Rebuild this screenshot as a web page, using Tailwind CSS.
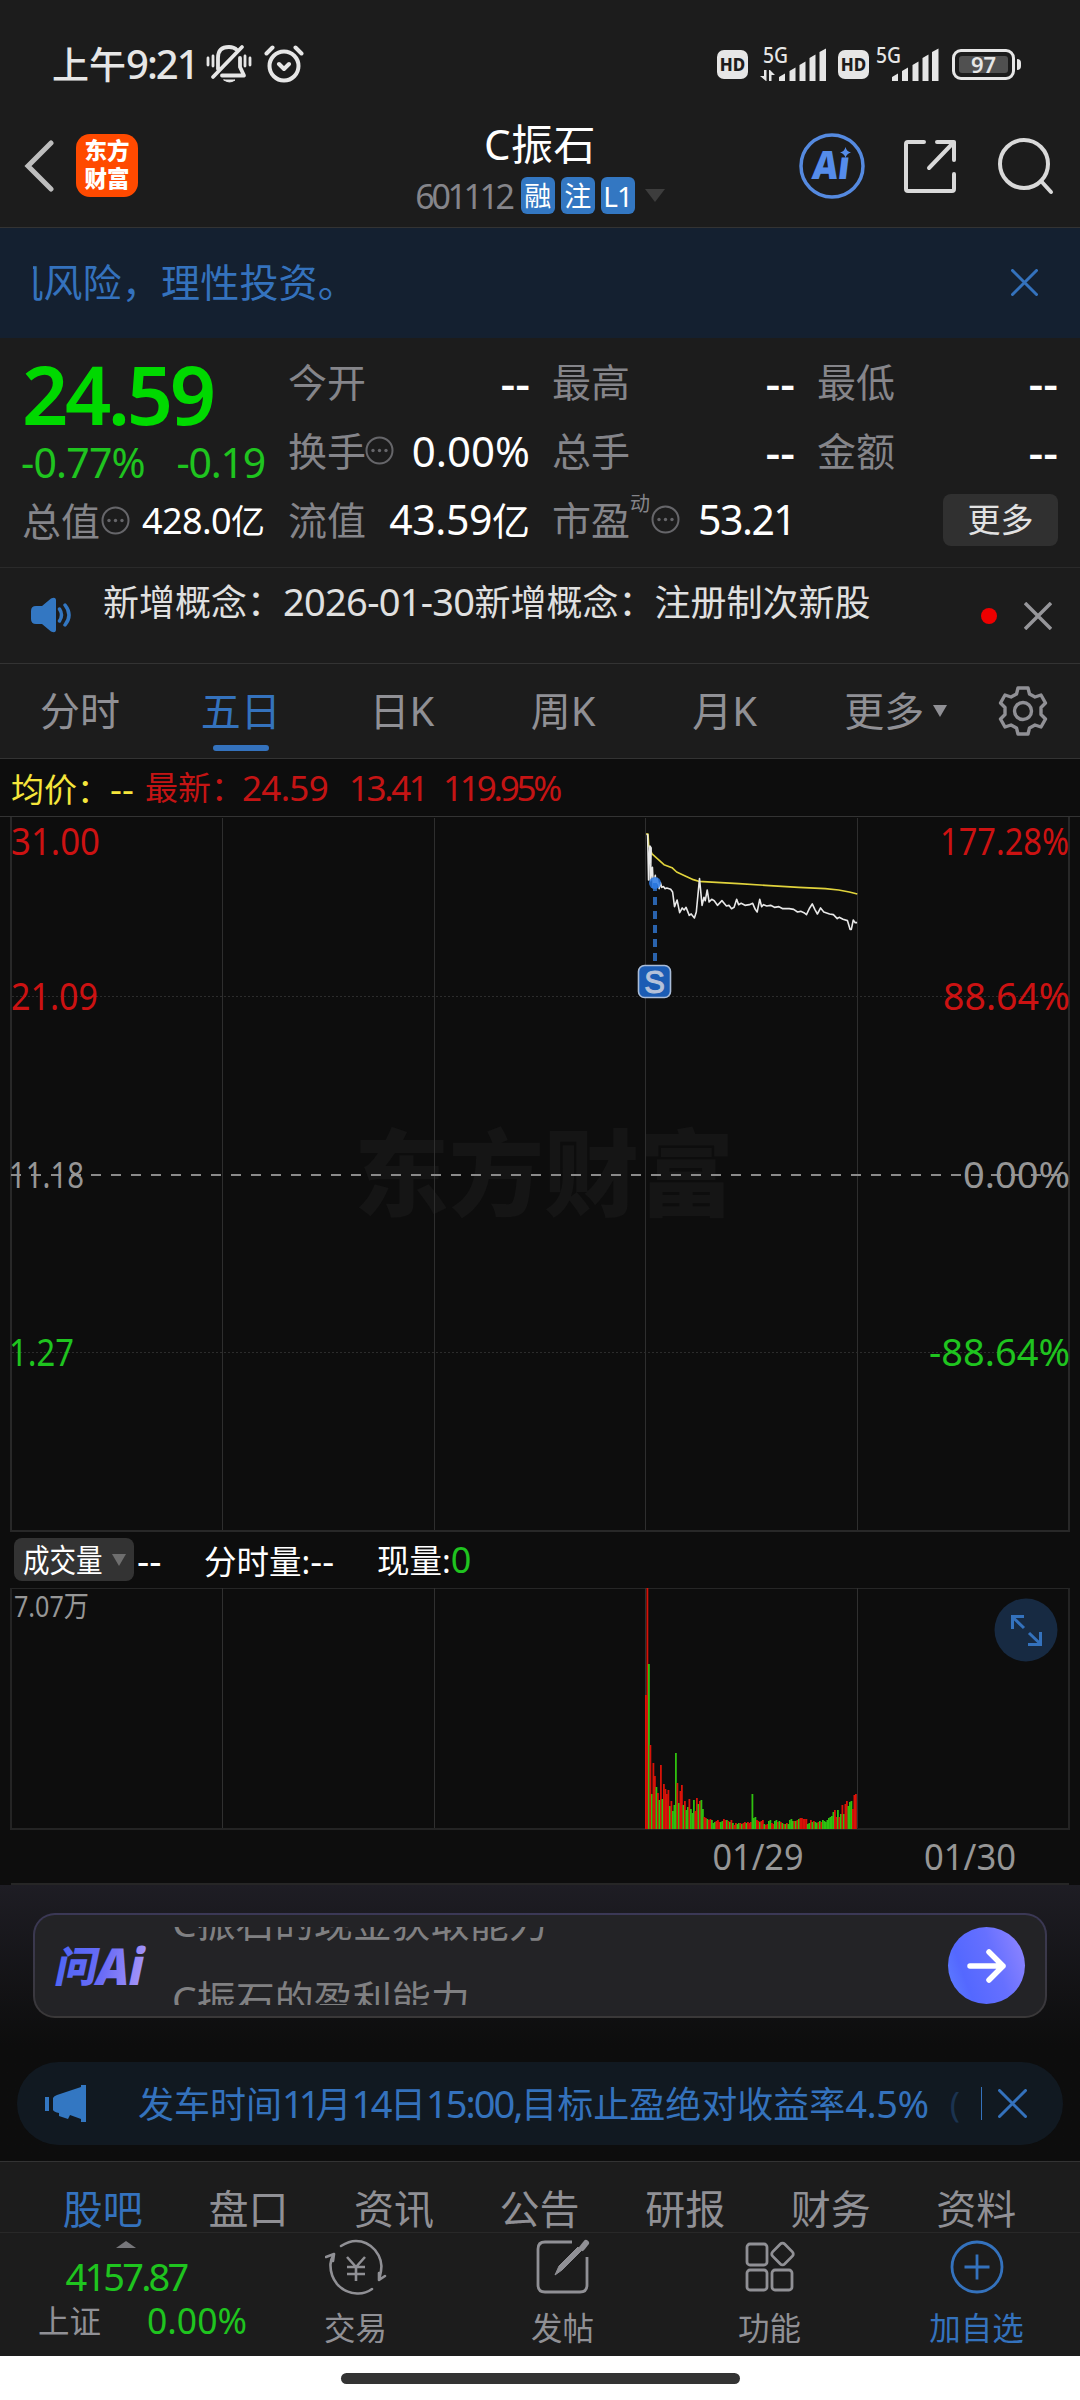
<!DOCTYPE html>
<html lang="zh-CN">
<head>
  <meta charset="UTF-8" />
  <meta name="viewport" content="width=device-width, initial-scale=1.0"/>
  <title>C振石 601112</title>
  <script src="https://cdn.jsdelivr.net/npm/@tailwindcss/browser@4"></script>
  <style>
    body { font-family: "Noto Sans", "Noto Sans CJK SC", sans-serif; }
  </style>
</head>
<body class="w-[1080px] h-[2400px] overflow-hidden bg-[#0d0d0d] text-white leading-none whitespace-nowrap">

  <!-- Status bar -->
  <div class="h-[108px] pt-5 pl-[52px] pr-[59px] flex items-center justify-between bg-[#1c1c1c] text-[#e6e6e6]">
    <div class="flex items-center">
      <span class="text-[37px] font-medium">上午<span class="text-[40px] tracking-[-2px]">9:21</span></span>
      <svg class="ml-[8px]" width="46" height="40" viewBox="0 0 46 40" fill="none" stroke="currentColor" stroke-width="3.800" stroke-linecap="round" stroke-linejoin="round">
        <path d="M12 25V14q0-11 11-11q5 0 8 3M34 14v9l4 8.500H16M7 33L36 3"/>
        <path d="M2 14v7M7 12v10M39 12v10M44 14v7" stroke-width="2.800"/>
        <path d="M18 36h11q-5.500 4-11 0z" fill="currentColor" stroke-width="1"/>
      </svg>
      <svg class="ml-[12px]" width="40" height="40" viewBox="0 0 40 40" fill="none" stroke="currentColor" stroke-width="4" stroke-linecap="round" stroke-linejoin="round">
        <circle cx="20" cy="22" r="14.500"/>
        <path d="M15 20l5 5l5-5M2.500 9.500l6-6M37.500 9.500l-6-6"/>
      </svg>
    </div>
    <div class="flex items-center">
      <div class="w-[31px] h-[29px] rounded-[7px] bg-[#e6e6e6] text-[#1c1c1c] text-[17px] font-extrabold flex items-center justify-center">HD</div>
      <svg class="ml-[12px]" width="68" height="36" viewBox="0 0 68 36" fill="currentColor">
        <text x="3" y="17" font-size="21" font-weight="500" textLength="25" lengthAdjust="spacingAndGlyphs">5G</text>
        <path d="M0 30h4v-6h2.500v11H6zM9 24h1l5 5h-3.500v6H9z"/>
        <path d="M19 31l6-3.500V35h-6zM29.500 25l6-3.500V35h-6zM39.500 19l6-3.500V35h-6zM49.500 12l6-3.500V35h-6zM59.500 6l6.500-3.500V35h-6.500z"/>
      </svg>
      <div class="ml-[10px] w-[31px] h-[29px] rounded-[7px] bg-[#e6e6e6] text-[#1c1c1c] text-[17px] font-extrabold flex items-center justify-center">HD</div>
      <svg class="ml-[6px]" width="68" height="36" viewBox="0 0 68 36" fill="currentColor">
        <text x="1" y="17" font-size="21" font-weight="500" textLength="25" lengthAdjust="spacingAndGlyphs">5G</text>
        <path d="M17 31l6-3.500V35h-6zM27 25l6-3.500V35h-6zM37.500 19l6-3.500V35h-6zM47.500 12l6-3.500V35h-6zM57 6l6.500-3.500V35H57z"/>
      </svg>
      <div class="ml-[9px] w-[63px] h-[31px] rounded-[9px] border-[3px] border-[#e6e6e6] p-[4px]">
        <div class="h-full rounded-[3px] bg-[#505050] text-[22px] font-semibold flex items-center justify-center">97</div>
      </div>
      <div class="ml-[2px] w-[4px] h-[11px] rounded-r bg-[#e6e6e6]"></div>
    </div>
  </div>

  <!-- Title bar -->
  <div class="h-[120px] grid grid-cols-[1fr_auto_1fr] bg-[#1c1c1c] border-b border-[#333]">
    <div class="flex items-center pl-[24px] pb-[4px]">
      <svg width="32" height="52" viewBox="0 0 32 52" fill="none" stroke="#bdbdbd" stroke-width="5" stroke-linecap="round" stroke-linejoin="miter"><path d="M27 3L4 26l23 23"/></svg>
      <div class="ml-[20px] w-[62px] h-[63px] rounded-[14px] bg-[#ff4a00] text-[22.500px] leading-[28px] font-black text-center pt-[3px]">东方<br>财富</div>
    </div>
    <div class="flex flex-col items-center w-[250px]">
      <div class="text-[42px] mt-[15px] tracking-[0.500px]">C振石</div>
      <div class="flex items-center mt-[12px]">
        <span class="text-[34px] text-[#85858a] h-[36px] leading-[36px] tracking-[-3.400px] mr-[9px]">601112</span>
        <span class="w-[34px] h-[37px] rounded-[6px] bg-[#3377c2] text-[27px] flex items-center justify-center mr-[6px]">融</span>
        <span class="w-[34px] h-[37px] rounded-[6px] bg-[#3377c2] text-[27px] flex items-center justify-center mr-[6px]">注</span>
        <span class="w-[34px] h-[37px] rounded-[6px] bg-[#3377c2] text-[28px] flex items-center justify-center tracking-[-1px]">L1</span>
        <svg class="ml-[10px]" width="20" height="13" fill="#3d3d3d"><path d="M0 0h20L10 13z"/></svg>
      </div>
    </div>
    <div class="flex items-center justify-end pr-[26px] pb-[4px]">
      <svg width="68" height="68" viewBox="0 0 68 68" fill="none">
        <circle cx="34" cy="34" r="31" stroke="#558ae0" stroke-width="3.500"/>
        <text x="19" y="47" font-size="39" font-weight="900" fill="#558cea" textLength="37" lengthAdjust="spacingAndGlyphs" transform="skewX(-7)">Aı</text>
        <path d="M47.500 15q1 4.500 5.500 5.500Q48.500 21.500 47.500 26q-1-4.500-5.500-5.500Q46.500 19.500 47.500 15z" fill="#558cea"/>
      </svg>
      <svg class="ml-[37px]" width="56" height="56" viewBox="0 0 56 56" fill="none" stroke="#d9d9d9" stroke-width="4" stroke-linecap="round" stroke-linejoin="round">
        <path d="M21 4H5q-2 0-2 2v45q0 2 2 2h44q2 0 2-2V36M34 4h17v18M51 4L26 30"/>
      </svg>
      <svg class="ml-[39px]" width="56" height="58" viewBox="0 0 56 58" fill="none" stroke="#d9d9d9" stroke-width="4" stroke-linecap="round">
        <circle cx="26" cy="27" r="24"/><path d="M43 44l10 11"/>
      </svg>
    </div>
  </div>

  <!-- Risk banner -->
  <div class="h-[110px] pl-[33px] pr-[42px] flex items-center justify-between bg-[#142030] text-[#3472bd]">
    <div class="w-[324px] overflow-hidden flex justify-end text-[39px] leading-[50px] tracking-[0.200px] -mt-[3px]">投机风险，理性投资。</div>
    <svg class="-mt-[2px]" width="27" height="27" viewBox="0 0 27 27" stroke="currentColor" stroke-width="3" stroke-linecap="round"><path d="M1.500 1.500l24 24M25.500 1.500l-24 24"/></svg>
  </div>

  <!-- Quote -->
  <div class="h-[230px] pt-[9px] pl-[22px] flex bg-[#1c1c1c] border-b border-[#2a2a2a] text-[39px] text-[#85858a]">
    <div class="w-[243px] mr-[23px]">
      <div class="h-[92px] flex items-center text-[81px] font-semibold text-[#00d900] tracking-[-3.400px]">24.59</div>
      <div class="h-[47px] flex items-center justify-between text-[41px] text-[#1fc41f] tracking-[-0.800px] -ml-[1px]"><span>-0.77%</span><span class="tracking-[-1.200px]">-0.19</span></div>
      <div class="h-[69px] flex items-center">总值
        <svg class="ml-[1px]" width="29" height="29" fill="#66666a"><circle cx="14.500" cy="14.500" r="13" fill="none" stroke="#66666a" stroke-width="2"/><circle cx="8" cy="14.500" r="1.700"/><circle cx="14.500" cy="14.500" r="1.700"/><circle cx="21" cy="14.500" r="1.700"/></svg>
        <span class="ml-auto text-white text-[34px]"><span class="text-[36px] tracking-[-0.600px]">428.0</span>亿</span>
      </div>
    </div>
    <div class="w-[242px] mr-[22px]">
      <div class="h-[69px] flex items-center justify-between"><span>今开</span><span class="text-white text-[46px] font-medium">--</span></div>
      <div class="h-[69px] flex items-center">换手
        <svg class="-ml-[1px]" width="29" height="29" fill="#66666a"><circle cx="14.500" cy="14.500" r="13" fill="none" stroke="#66666a" stroke-width="2"/><circle cx="8" cy="14.500" r="1.700"/><circle cx="14.500" cy="14.500" r="1.700"/><circle cx="21" cy="14.500" r="1.700"/></svg>
        <span class="ml-auto text-white text-[42px]">0.00%</span>
      </div>
      <div class="h-[69px] flex items-center justify-between"><span>流值</span><span class="text-white text-[38px]"><span class="text-[41px] tracking-[-0.400px]">43.59</span>亿</span></div>
    </div>
    <div class="w-[506px]">
      <div class="h-[69px] flex items-center justify-between">
        <div class="w-[243px] flex items-center justify-between"><span>最高</span><span class="text-white text-[46px] font-medium">--</span></div>
        <div class="w-[241px] flex items-center justify-between"><span>最低</span><span class="text-white text-[46px] font-medium">--</span></div>
      </div>
      <div class="h-[69px] flex items-center justify-between">
        <div class="w-[243px] flex items-center justify-between"><span>总手</span><span class="text-white text-[46px] font-medium">--</span></div>
        <div class="w-[241px] flex items-center justify-between"><span>金额</span><span class="text-white text-[46px] font-medium">--</span></div>
      </div>
      <div class="h-[69px] flex items-center">市盈
        <span class="text-[20px] -mt-[32px]">动</span>
        <svg class="ml-[1px]" width="29" height="29" fill="#66666a"><circle cx="14.500" cy="14.500" r="13" fill="none" stroke="#66666a" stroke-width="2"/><circle cx="8" cy="14.500" r="1.700"/><circle cx="14.500" cy="14.500" r="1.700"/><circle cx="21" cy="14.500" r="1.700"/></svg>
        <span class="ml-[18px] text-white text-[41px] tracking-[-1.500px]">53.21</span>
        <span class="ml-auto w-[115px] h-[52px] rounded-[8px] bg-[#303030] text-[#e2e2e2] text-[33px] flex items-center justify-center">更多</span>
      </div>
    </div>
  </div>

  <!-- News -->
  <div class="h-[96px] pl-[31px] pr-[28px] flex items-center bg-[#1c1c1c] border-b border-[#333]">
    <svg class="-mt-[2px]" width="41" height="36" viewBox="0 0 41 36" fill="#3377c2">
      <path d="M5 9h6L20 1.500q5-2 5 2v29q0 4-5 2L11 27H5q-5 0-5-5v-8q0-5 5-5z"/>
      <path d="M28.500 12q4 6 0 12M34 8q8 10 0 20" fill="none" stroke="#3377c2" stroke-width="3.500" stroke-linecap="round"/>
    </svg>
    <div class="ml-[31px] -mt-[28px] text-[36px] text-[#e0e0e0]">新增概念：<span class="text-[38px] tracking-[-0.700px]">2026-01-30</span>新增概念：注册制次新股</div>
    <span class="ml-auto w-4 h-4 rounded-full bg-[#ee0000]"></span>
    <svg class="ml-[27px]" width="28" height="28" viewBox="0 0 28 28" stroke="#96969a" stroke-width="3.500"><path d="M1 1l26 26M27 1L1 27"/></svg>
  </div>

  <!-- Chart period tabs -->
  <div class="h-[95px] flex items-center bg-[#1c1c1c] border-b border-[#333] text-[40px] text-[#909095]">
    <div class="w-[160px] text-center">分时</div>
    <div class="w-[161.300px] h-full flex flex-col items-center justify-end text-[#3472bd]">五日<span class="mt-[14px] mb-[7px] w-[56px] h-[6px] rounded-full bg-[#3472bd]"></span></div>
    <div class="w-[161.300px] text-center">日K</div>
    <div class="w-[161.300px] text-center">周K</div>
    <div class="w-[161.300px] text-center">月K</div>
    <div class="w-[181px] flex items-center justify-center">更多<svg class="ml-[9px]" width="14" height="12" fill="#909095"><path d="M0 0h14L7 12z"/></svg></div>
    <svg class="ml-[12px]" width="50" height="50" viewBox="-25 -25 50 50" fill="none" stroke="#909095" stroke-width="3.400" stroke-linejoin="round">
      <path d="M-5-23H5L6.500-17L12-14L18-16L22.500-8L18-3.500V3.500L22.500 8L18 16L12 14L6.500 17L5 23H-5L-6.500 17L-12 14L-18 16L-22.500 8L-18 3.500V-3.500L-22.500-8L-18-16L-12-14L-6.500-17z"/>
      <circle r="8.500"/>
    </svg>
  </div>

  <!-- Legend -->
  <div class="h-[57px] pl-[11px] flex items-center text-[33px] text-[#c41414]">
    <span class="text-[#f5e53b] w-[134px]">均价：<span class="text-[37px]">--</span></span>
    <span class="w-[97px]">最新：</span>
    <span class="w-[107px] text-[35px] tracking-[-0.700px]">24.59</span>
    <span class="w-[94px] text-[35px] tracking-[-2.400px]">13.41</span>
    <span class="text-[35px] tracking-[-3.200px]">119.95%</span>
  </div>

  <!-- Price chart -->
  <svg class="block" width="1080" height="716" viewBox="0 816 1080 716">
    <text x="354" y="1209" font-size="94" font-weight="900" fill="#151515" textLength="380" lengthAdjust="spacingAndGlyphs">东方财富</text>
    <g shape-rendering="crispEdges" fill="none">
      <path d="M0 816.500H1080" stroke="#333"/>
      <path d="M11 817V1531H1069V817" stroke="#282828" stroke-width="2"/>
      <path d="M222.500 818V1530M434.500 818V1530M645.500 818V1530M857.500 818V1530" stroke="#2e2e2e"/>
      <path d="M12 996.500H1068M12 1352.500H1068" stroke="#2c2c2c" stroke-dasharray="2 2"/>
      <path d="M11 1174.500H1068" stroke="#8a8a8a" stroke-width="2" stroke-dasharray="10 10"/>
    </g>
    <g transform="translate(620 810) scale(.3333)" fill="none" stroke-linejoin="round">
      <path d="M78 72l6 0l2 34l10 26l16 14l20 18l24 9l14 13l24 11l26 12l16 5l120 7l80 5l100 6l80 4l40 4l32 6l24 6" stroke="#e0d33c" stroke-width="5"/>
      <path transform="translate(3.100 0) scale(.961 1)" d="M80 74l3 0l3 136l4-102l4 6l-2 98l6-40l3 62l6-38l2 34l4-24l6 30l4-18l4 14l6-2l4 6l6-2l12 4l6 8l6 44l8-20l8 38l8-14l6 6l6-8l10 24l6-4l10 12l6-18l4-40l6-60l8 80l6-24l4 10l6-32l6 36l8-8l8 4l10 14l14-14l14 16l8-2l8 10l8-4l8-24l6 16l8-4l12 6l14-2l10-4l8 18l6 8l8-38l6 22l6-6l10 4l12-2l12 6l14-2l12 6l20 0l14 2l12 8l10-2l10 4l8 6l10-20l8-12l8 16l8 14l10-18l10 12l18 6l12 2l12 12l6-4l12 6l14 4l8 26l4 0l6-28l6 8l6 0" stroke="#e8e8e8" stroke-width="5"/>
    </g>
    <path d="M655 883V962" stroke="#2a63ad" stroke-width="4" stroke-dasharray="8 6"/>
    <circle cx="655" cy="883" r="6" fill="#2a7ae8" opacity=".85"/>
    <rect x="638.500" y="965.500" width="32" height="32" rx="6" fill="#1b5cb4" stroke="#a9bcd8" stroke-width="1.600"/>
    <text x="654.500" y="993" text-anchor="middle" font-size="31" font-family="Liberation Sans" fill="#b5c2da" stroke="#b5c2da">S</text>
    <g font-size="38" fill="#cc1212">
      <text x="11" y="855" textLength="89" lengthAdjust="spacingAndGlyphs">31.00</text>
      <text x="11" y="1010" textLength="87" lengthAdjust="spacingAndGlyphs">21.09</text>
      <text x="1069" y="855" text-anchor="end" textLength="129" lengthAdjust="spacingAndGlyphs">177.28%</text>
      <text x="1070" y="1010" text-anchor="end" textLength="127" lengthAdjust="spacingAndGlyphs">88.64%</text>
      <g fill="#969696" font-size="37">
        <text x="9" y="1188" textLength="75" lengthAdjust="spacingAndGlyphs">11.18</text>
        <text x="1070" y="1188" text-anchor="end" textLength="107" lengthAdjust="spacingAndGlyphs">0.00%</text>
      </g>
      <g fill="#1fc41f">
        <text x="9" y="1366" textLength="65" lengthAdjust="spacingAndGlyphs">1.27</text>
        <text x="1070" y="1366" text-anchor="end" textLength="141" lengthAdjust="spacingAndGlyphs">-88.64%</text>
      </g>
    </g>
  </svg>

  <!-- Volume header -->
  <div class="h-[55px] pl-[14px] flex items-center text-[32.500px]">
    <div class="w-[120px] h-[43px] rounded-[8px] bg-[#333] pl-[9px] flex items-center justify-between pr-[8px]">
      <span class="w-[80px] text-[32px]"><span class="inline-block origin-left scale-x-[.83]">成交量</span></span>
      <svg width="14" height="12" fill="#6e6e6e"><path d="M0 0h14L7 12z"/></svg>
    </div>
    <span class="w-[67px] ml-[3px] text-[38px]">--</span>
    <span class="w-[173px]">分时量:<span class="text-[37px]">--</span></span>
    <span>现量:<span class="text-[36px] text-[#1fc41f]">0</span></span>
  </div>

  <!-- Volume chart -->
  <svg class="block" width="1080" height="298" viewBox="0 1587 1080 298">
    <g shape-rendering="crispEdges" fill="none">
      <path d="M11 1588.500H1069" stroke="#262626"/>
      <path d="M11 1588V1829H1069V1588" stroke="#242424" stroke-width="2"/>
      <path d="M222.500 1588V1828M434.500 1588V1828M645.500 1588V1828M857.500 1588V1828" stroke="#303030"/>
      <path d="M11 1884H1069" stroke="#262626" stroke-width="2"/>
    </g>
    <g id="volumeBars"></g>
    <text x="14" y="1617" font-size="29" fill="#969696" textLength="75" lengthAdjust="spacingAndGlyphs">7.07万</text>
    <g font-size="37" fill="#969696">
      <text x="758" y="1870" text-anchor="middle" textLength="91" lengthAdjust="spacingAndGlyphs">01/29</text>
      <text x="970" y="1870" text-anchor="middle" textLength="92" lengthAdjust="spacingAndGlyphs">01/30</text>
    </g>
    <circle cx="1026" cy="1630" r="31.500" fill="#172a42"/>
    <path d="M1024 1616.500H1012.500V1629M1012.500 1617L1024 1628M1028 1644.500H1040.500V1632M1040.500 1644L1029 1633" fill="none" stroke="#3472bd" stroke-width="3"/>
  </svg>

  <!-- Ask AI + notice -->
  <div class="h-[276px] pt-[28px] bg-linear-to-b from-[#1e1d24] via-[#0d0d0d] via-58% to-[#0d0d0d]">
    <div class="mx-[33px] h-[105px] rounded-[22px] p-[2px] bg-linear-to-b from-[#3b3856] to-[#3a3838]">
      <div class="h-full rounded-[20px] bg-[#232326] pl-[18px] pr-[20px] flex items-center justify-between">
        <div class="flex items-center">
          <svg width="94" height="48" viewBox="0 0 94 48">
            <defs><linearGradient id="askGradient" gradientUnits="userSpaceOnUse" x1="0" y1="0" x2="94" y2="0"><stop offset="0" stop-color="#4f66f5"/><stop offset=".5" stop-color="#6a6cf6"/><stop offset="1" stop-color="#ad9af8"/></linearGradient></defs>
            <g transform="translate(9 0) skewX(-12)" fill="url(#askGradient)" font-weight="900">
              <text x="0" y="40" font-size="42" textLength="42" lengthAdjust="spacingAndGlyphs">问</text>
              <text x="41" y="43" font-size="51" textLength="47" lengthAdjust="spacingAndGlyphs">Ai</text>
            </g>
          </svg>
          <div class="ml-[25px] h-[78px] overflow-hidden text-[39px] leading-[77px] text-[#808082]">
            <div class="-mt-[44px]">C振石的现金获取能力</div>
            <div>C振石的盈利能力</div>
          </div>
        </div>
        <div class="w-[77px] h-[77px] rounded-full bg-linear-[70deg,#5f80ff,#5468ff_25%,#6670ff_60%,#9488ff] flex items-center justify-center">
          <svg width="40" height="34" viewBox="0 0 40 34" fill="none" stroke="#fff" stroke-width="5.500" stroke-linecap="round" stroke-linejoin="round"><path d="M3 17h33M22 3l14 14l-14 14"/></svg>
        </div>
      </div>
    </div>
    <div class="mt-[44px] mx-[17px] h-[83px] rounded-full bg-[#111921] text-[#3472bd] pl-[28px] pr-[36px] flex items-center">
      <svg width="41" height="37" viewBox="0 0 41 37" fill="#3377c2"><path d="M0 12h4v14H0zM8 13Q9 11 12 10L36 2V0h5v37h-5v-3L25 30l-2 4l-9-3v-3q-5-1-6-3z"/></svg>
      <div class="ml-[52px] text-[36px]">发车时间<span class="text-[38px] tracking-[-5px]">11</span>月<span class="text-[38px] tracking-[-2.500px]">14</span>日<span class="text-[38px] tracking-[-2px]">15:00,</span>目标止盈绝对收益率<span class="text-[38px] tracking-[-0.500px]">4.5%</span></div>
      <span class="ml-auto text-[34px] text-[#1b3350]">(</span>
      <span class="ml-[21px] w-px h-[33px] bg-[#3472bd]"></span>
      <svg class="ml-[16px] -mt-[1px]" width="29" height="29" viewBox="0 0 29 29" stroke="currentColor" stroke-width="3" stroke-linecap="round"><path d="M1.500 1.500l26 26M27.500 1.500l-26 26"/></svg>
    </div>
  </div>

  <!-- Content tabs -->
  <div class="h-[71px] pt-[27px] pl-[30px] flex bg-[#1c1c1c] border-t border-[#333] text-[40px] text-[#909095] overflow-hidden">
    <div class="w-[145.600px] text-center text-[#3472bd]">股吧</div>
    <div class="w-[145.600px] text-center">盘口</div>
    <div class="w-[145.600px] text-center">资讯</div>
    <div class="w-[145.600px] text-center">公告</div>
    <div class="w-[145.600px] text-center">研报</div>
    <div class="w-[145.600px] text-center">财务</div>
    <div class="w-[145.600px] text-center">资料</div>
  </div>

  <!-- Bottom bar -->
  <div class="h-[124px] flex bg-[#1c1c1c] border-t border-[#282828] text-[31.500px] text-[#909095]">
    <div class="w-[252px] pt-[8px] flex flex-col items-center">
      <svg width="20" height="7" fill="#77777b"><path d="M0 7h20L10 0z"/></svg>
      <div class="mt-[9px] text-[38px] text-[#1fc41f] tracking-[-2.800px]">4157.87</div>
      <div class="w-full mt-[8px] pl-[38px] flex items-center"><span class="w-[109px]">上证</span><span class="text-[35.500px] text-[#1fc41f]">0.00%</span></div>
    </div>
    <div class="w-[207px] pt-[6px] flex flex-col items-center">
      <svg width="62" height="56" viewBox="0 0 62 56" fill="none" stroke="currentColor" stroke-width="2.600" stroke-linecap="round" stroke-linejoin="round">
        <path d="M16 7Q24 2 31 2Q42 2 50 11Q58 21 56 32Q55 37 54 41M54 41L60 37M54 41V34"/>
        <path d="M47 50Q40 55 32 54.500Q20 54 12 45Q5 36 5.500 25Q6 20 9 15M9 15L1 18M9 15L8 22"/>
        <path d="M22 18l9 10l9-10M31 28v14M22 28h18M22 35h18" stroke-linecap="butt"/>
      </svg>
      <div class="mt-[17px]">交易</div>
    </div>
    <div class="w-[207px] pt-[6px] flex flex-col items-center">
      <svg width="54" height="56" viewBox="0 0 54 56" fill="none" stroke="currentColor" stroke-width="2.800">
        <path d="M36 3H9Q2 3 2 10v36q0 7 7 7h35q7 0 7-7V18"/>
        <path d="M19 36l4-9L42 8l3 4L26 31z" fill="currentColor" stroke-width="1"/><path d="M46 9l4-5" stroke-width="6" stroke-linecap="round"/>
      </svg>
      <div class="mt-[17px]">发帖</div>
    </div>
    <div class="w-[207px] pt-[6px] flex flex-col items-center">
      <svg width="52" height="56" viewBox="0 0 52 56" fill="none" stroke="currentColor" stroke-width="2.800" stroke-linejoin="round">
        <rect x="3" y="5" width="20" height="21" rx="3"/><rect x="3" y="31" width="20" height="20" rx="3"/><rect x="28" y="31" width="20" height="20" rx="3"/>
        <rect x="30" y="6.500" width="17" height="17" rx="3" transform="rotate(45 38.500 15)"/>
      </svg>
      <div class="mt-[17px]">功能</div>
    </div>
    <div class="w-[207px] pt-[6px] flex flex-col items-center text-[#3472bd]">
      <svg width="56" height="56" viewBox="0 0 56 56" fill="none" stroke="currentColor" stroke-width="2.800"><circle cx="28" cy="28" r="25"/><path d="M28 15.500v25M15.500 28h25"/></svg>
      <div class="mt-[17px]">加自选</div>
    </div>
  </div>

  <!-- Gesture bar -->
  <div class="h-[44px] bg-white pt-[17px]">
    <div class="mx-auto w-[399px] h-[11px] rounded-full bg-[#333]"></div>
  </div>

  <script>
    // Minute volume of 01/29: r = up, g = down, number = bar height
    const volume = `r134 r241 g165 r84 g35 r66 r53 g42 r36 g29 r64 g30 r45 r40 r35 r39 g23 r28 g18 g24
      g76 r46 g26 r38 r44 g24 r28 g19 g22 r30 g20 g16 g29 r18 r31 g25 r28 g29 g20 r12
      r11 g10 r9 r10 g9 g6 g7 r8 r9 r7 g7 g8 r10 r9 g9 r8 g7 r9 g6 r4
      r6 g5 g6 r6 g5 r6 r7 g6 r7 r6 r7 g35 g11 g12 r9 r8 g7 r8 r9 g5
      r4 r5 g8 g9 r6 r5 g8 g9 r7 g8 r7 g6 r5 g5 r6 g5 g9 g10 g8 r8
      g8 r9 g10 r11 r11 r10 r10 r10 g5 g6 r9 g7 r8 g7 g6 r7 g8 r7 g9 g8
      g7 g9 g11 g12 g13 g17 r19 r12 g19 r12 g15 r24 g15 r25 r28 g23 g27 g28 r20 r34 r35`.split(/\s+/);
    document.getElementById("volumeBars").innerHTML = volume.map((v, i) => {
      const height = Number(v.slice(1));
      const color = v[0] === "r" ? "#d81208" : "#2fc00f";
      return `<rect x="${645 + i * 1.5}" y="${1829 - height}" width="1.8" height="${height}" fill="${color}"/>`;
    }).join("");
  </script>
</body>
</html>
